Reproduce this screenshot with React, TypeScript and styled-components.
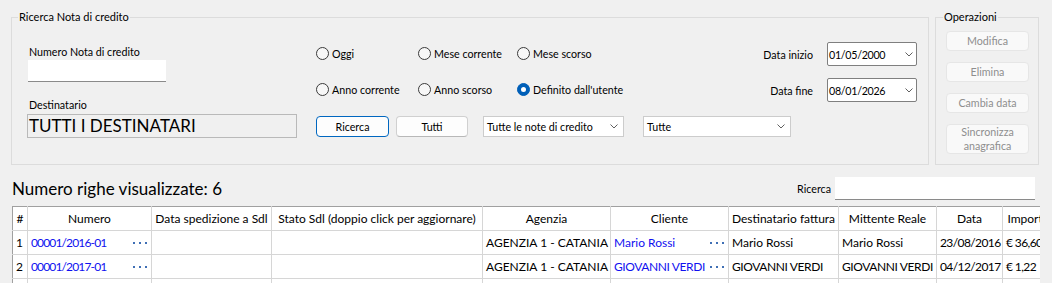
import React from 'react';
import styled, { createGlobalStyle } from 'styled-components';

const GlobalStyle = createGlobalStyle`
	html, body {
		margin: 0;
		padding: 0;
		background: #f0f0f0;
	}
	body {
		font-family: Lato, "Noto Sans", sans-serif;
		font-size: 12px;
		color: #000;
	}
`;

const Page = styled.div`
	width: 1052px;
	height: 283px;
	overflow: hidden;
	box-sizing: border-box;
	padding: 17px 0 0 11px;
	background: #f0f0f0;
`;

const TopRow = styled.div`
	display: flex;
	gap: 6px;
	height: 148px;
	font-size: 10.7px;
`;

const GroupBox = styled.div<{ $width: number }>`
	box-sizing: border-box;
	width: ${(p) => p.$width}px;
	height: 148px;
	border: 1px solid #dcdcdc;
	display: flex;
	flex-direction: column;
`;

const GroupTitle = styled.div<{ $indent: number }>`
	margin: -9px 0 0 ${(p) => p.$indent}px;
	padding: 0 1px;
	width: fit-content;
	height: 16px;
	line-height: 16px;
	font-size: 11px;
	background: #f0f0f0;
`;

const SearchBody = styled.div`
	display: flex;
`;

const LeftCol = styled.div`
	margin-left: 15px;
	width: 270px;
	display: flex;
	flex-direction: column;
`;

const FieldLabel = styled.div<{ $top: number }>`
	margin: ${(p) => p.$top}px 0 0 2px;
	line-height: 16px;
	height: 16px;
`;

const TextInput = styled.div<{ $width: number }>`
	box-sizing: border-box;
	margin-left: 1px;
	width: ${(p) => p.$width}px;
	height: 22px;
	background: #fff;
	border-bottom: 1px solid #8a8a8a;
`;

const DestBox = styled.div`
	box-sizing: border-box;
	margin-top: 1px;
	width: 270px;
	height: 24px;
	border: 1px solid #b9b9b9;
	background: #f0f0f0;
	font-size: 17px;
	line-height: 22px;
	padding-left: 1px;
	white-space: nowrap;
`;

const RightArea = styled.div`
	flex: 1;
	margin: 0 11px 0 19px;
	padding-top: 17px;
	display: flex;
	flex-direction: column;
`;

const OptionsRow = styled.div`
	display: flex;
	justify-content: space-between;
`;

const RadioGrid = styled.div`
	display: grid;
	grid-template-columns: 102px 99px auto;
	grid-auto-rows: 23px;
	row-gap: 13px;
	align-items: center;
`;

const RadioItem = styled.label`
	display: flex;
	align-items: center;
	gap: 3px;
	white-space: nowrap;
`;

const RadioDot = styled.span<{ $checked?: boolean }>`
	box-sizing: border-box;
	width: 13px;
	height: 13px;
	border-radius: 50%;
	border: 1px solid ${(p) => (p.$checked ? '#005fb8' : '#3a3a3a')};
	background: ${(p) => (p.$checked ? '#005fb8' : '#f7f7f7')};
	display: flex;
	align-items: center;
	justify-content: center;
	&::after {
		content: '';
		display: ${(p) => (p.$checked ? 'block' : 'none')};
		width: 5px;
		height: 5px;
		border-radius: 50%;
		background: #fff;
	}
`;

const DateGrid = styled.div`
	display: grid;
	grid-template-columns: auto 90px;
	grid-auto-rows: 24px;
	column-gap: 14px;
	row-gap: 12px;
	align-items: center;
`;

const DateLabel = styled.span`
	justify-self: end;
`;

const Combo = styled.div<{ $width: number; $dark?: boolean }>`
	box-sizing: border-box;
	width: ${(p) => p.$width}px;
	height: ${(p) => (p.$dark ? 24 : 21)}px;
	background: #fff;
	border: 1px solid ${(p) => (p.$dark ? '#7f7f7f' : '#cccccc')};
	border-radius: ${(p) => (p.$dark ? 2 : 0)}px;
	display: flex;
	align-items: center;
	justify-content: space-between;
	padding: 0 ${(p) => (p.$dark ? 3 : 5)}px 0 ${(p) => (p.$dark ? 1 : 3)}px;
	white-space: nowrap;
`;

const ActionsRow = styled.div`
	display: flex;
	align-items: center;
	margin-top: 14px;
	height: 21px;
`;

const Button = styled.button<{ $width: number; $primary?: boolean; $gap: number }>`
	box-sizing: border-box;
	margin-left: ${(p) => p.$gap}px;
	width: ${(p) => p.$width}px;
	height: 21px;
	padding: 0;
	font: inherit;
	color: #000;
	background: #fdfdfd;
	border: 1px solid ${(p) => (p.$primary ? '#0067c0' : '#d0d0d0')};
	border-bottom-color: ${(p) => (p.$primary ? '#0067c0' : '#b8b8b8')};
	border-radius: 4px;
`;

const ComboSlot = styled.div<{ $gap: number }>`
	margin-left: ${(p) => p.$gap}px;
`;

const OpsList = styled.div`
	display: flex;
	flex-direction: column;
	gap: 11px;
	margin: 6px 0 0 10px;
`;

const OpButton = styled.button<{ $tall?: boolean }>`
	box-sizing: border-box;
	width: 83px;
	height: ${(p) => (p.$tall ? 30 : 20)}px;
	padding: 0;
	font: inherit;
	line-height: 14px;
	color: #8e8e8e;
	background: #f9f9f9;
	border: 1px solid #e6e6e6;
	border-radius: 4px;
`;

const StatusRow = styled.div`
	display: flex;
	align-items: center;
	margin-top: 12px;
	height: 23px;
	padding-right: 17px;
`;

const RowCount = styled.div`
	flex: 1;
	margin-left: 1px;
	font-size: 17px;
	line-height: 20px;
`;

const SearchLabel = styled.span`
	margin-right: 4px;
	font-size: 10.7px;
`;

const SearchInput = styled.div`
	box-sizing: border-box;
	width: 200px;
	height: 23px;
	background: #fff;
	border-bottom: 1px solid #8a8a8a;
`;

const GridViewport = styled.div`
	margin: 6px 0 0 1px;
	width: 1028px;
	height: 80px;
	overflow: hidden;
	background: #fff;
`;

const Table = styled.table`
	border-collapse: collapse;
	table-layout: fixed;
	width: 1042px;
`;

const HeadCell = styled.th`
	height: 23px;
	padding: 0 2px;
	font-weight: normal;
	text-align: center;
	white-space: nowrap;
	overflow: hidden;
	border: 1px solid #d6d6d6;
	border-top-color: #a0a0a0;
	&:first-child {
		border-left-color: #a0a0a0;
	}
`;

const Cell = styled.td`
	height: 23px;
	padding: 0 2px 0 3px;
	white-space: nowrap;
	overflow: hidden;
	border: 1px solid #d6d6d6;
	&:first-child {
		border-left-color: #a0a0a0;
	}
`;

const LinkCell = styled.div`
	display: flex;
	align-items: center;
	justify-content: space-between;
	gap: 2px;
	padding-right: 2px;
	color: #1010f0;
`;

const Txt = styled.span<{ $ls: number }>`
	letter-spacing: ${(p) => p.$ls}px;
`;

const ChevronDown = () => (
	<svg width="8" height="5" viewBox="0 0 8 5">
		<polyline points="0.5,0.5 4,4 7.5,0.5" fill="none" stroke="#606060" strokeWidth="1" />
	</svg>
);

const MoreDots = () => (
	<svg width="14" height="2" viewBox="0 0 14 2">
		<rect x="0" y="0" width="2" height="2" fill="#3f6fb5" />
		<rect x="6" y="0" width="2" height="2" fill="#3f6fb5" />
		<rect x="12" y="0" width="2" height="2" fill="#3f6fb5" />
	</svg>
);

const columns = [
	{ title: '#', width: 15 },
	{ title: 'Numero', width: 124 },
	{ title: 'Data spedizione a Sdl', width: 120 },
	{ title: 'Stato Sdl (doppio click per aggiornare)', width: 211 },
	{ title: 'Agenzia', width: 128 },
	{ title: 'Cliente', width: 118 },
	{ title: 'Destinatario fattura', width: 110 },
	{ title: 'Mittente Reale', width: 98 },
	{ title: 'Data', width: 66 },
	{ title: 'Importo', width: 52 }
];

const rows = [
	{ n: '1', numero: '00001/2016-01', agenzia: 'AGENZIA 1 - CATANIA', cliente: 'Mario Rossi', dest: 'Mario Rossi', mitt: 'Mario Rossi', data: '23/08/2016', importo: '€ 36,60' },
	{ n: '2', numero: '00001/2017-01', agenzia: 'AGENZIA 1 - CATANIA', cliente: 'GIOVANNI VERDI', dest: 'GIOVANNI VERDI', mitt: 'GIOVANNI VERDI', data: '04/12/2017', importo: '€ 1,22' },
	{ n: '3', numero: '00002/2017-01', agenzia: 'AGENZIA 1 - CATANIA', cliente: 'Mario Rossi', dest: 'Mario Rossi', mitt: 'Mario Rossi', data: '15/03/2018', importo: '€ 12,20' }
];

const radios = [
	{ label: 'Oggi' },
	{ label: 'Mese corrente' },
	{ label: 'Mese scorso' },
	{ label: 'Anno corrente' },
	{ label: 'Anno scorso' },
	{ label: "Definito dall'utente", checked: true }
];

// capitals get a little tighter spacing, mixed case is left alone
const nameSpacing = (s: string) => (s === s.toUpperCase() ? -0.4 : 0);

const App: React.FC = () => {
	return (
		<Page>
			<GlobalStyle />
			<TopRow>
				<GroupBox $width={918}>
					<GroupTitle $indent={6}>Ricerca Nota di credito</GroupTitle>
					<SearchBody>
						<LeftCol>
							<FieldLabel $top={19}>Numero Nota di credito</FieldLabel>
							<TextInput $width={138} />
							<FieldLabel $top={15}>Destinatario</FieldLabel>
							<DestBox>TUTTI I DESTINATARI</DestBox>
						</LeftCol>
						<RightArea>
							<OptionsRow>
								<RadioGrid>
									{radios.map((r) => (
										<RadioItem key={r.label}>
											<RadioDot $checked={r.checked} />
											{r.label}
										</RadioItem>
									))}
								</RadioGrid>
								<DateGrid>
									<DateLabel>Data inizio</DateLabel>
									<Combo $width={90} $dark>
										<Txt $ls={-0.3}>01/05/2000</Txt>
										<ChevronDown />
									</Combo>
									<DateLabel>Data fine</DateLabel>
									<Combo $width={90} $dark>
										<Txt $ls={-0.3}>08/01/2026</Txt>
										<ChevronDown />
									</Combo>
								</DateGrid>
							</OptionsRow>
							<ActionsRow>
								<Button $width={73} $gap={0} $primary>
									Ricerca
								</Button>
								<Button $width={72} $gap={7}>
									Tutti
								</Button>
								<ComboSlot $gap={15}>
									<Combo $width={141}>
										Tutte le note di credito
										<ChevronDown />
									</Combo>
								</ComboSlot>
								<ComboSlot $gap={19}>
									<Combo $width={148}>
										Tutte
										<ChevronDown />
									</Combo>
								</ComboSlot>
							</ActionsRow>
						</RightArea>
					</SearchBody>
				</GroupBox>
				<GroupBox $width={104}>
					<GroupTitle $indent={7}>Operazioni</GroupTitle>
					<OpsList>
						<OpButton disabled>Modifica</OpButton>
						<OpButton disabled>Elimina</OpButton>
						<OpButton disabled>Cambia data</OpButton>
						<OpButton disabled $tall>
							Sincronizza
							<br />
							anagrafica
						</OpButton>
					</OpsList>
				</GroupBox>
			</TopRow>

			<StatusRow>
				<RowCount>Numero righe visualizzate: 6</RowCount>
				<SearchLabel>Ricerca</SearchLabel>
				<SearchInput />
			</StatusRow>

			<GridViewport>
				<Table>
					<colgroup>
						{columns.map((c) => (
							<col key={c.title} style={{ width: c.width }} />
						))}
					</colgroup>
					<thead>
						<tr>
							{columns.map((c) => (
								<HeadCell key={c.title}>{c.title}</HeadCell>
							))}
						</tr>
					</thead>
					<tbody>
						{rows.map((r) => (
							<tr key={r.n}>
								<Cell>{r.n}</Cell>
								<Cell>
									<LinkCell>
										<Txt $ls={-0.85}>{r.numero}</Txt>
										<MoreDots />
									</LinkCell>
								</Cell>
								<Cell />
								<Cell />
								<Cell>{r.agenzia}</Cell>
								<Cell>
									<LinkCell>
										<Txt $ls={nameSpacing(r.cliente)}>{r.cliente}</Txt>
										<MoreDots />
									</LinkCell>
								</Cell>
								<Cell>
									<Txt $ls={nameSpacing(r.dest)}>{r.dest}</Txt>
								</Cell>
								<Cell>
									<Txt $ls={nameSpacing(r.mitt)}>{r.mitt}</Txt>
								</Cell>
								<Cell>
									<Txt $ls={-0.6}>{r.data}</Txt>
								</Cell>
								<Cell>
									<Txt $ls={-0.6}>{r.importo}</Txt>
								</Cell>
							</tr>
						))}
					</tbody>
				</Table>
			</GridViewport>
		</Page>
	);
};

export default App;
